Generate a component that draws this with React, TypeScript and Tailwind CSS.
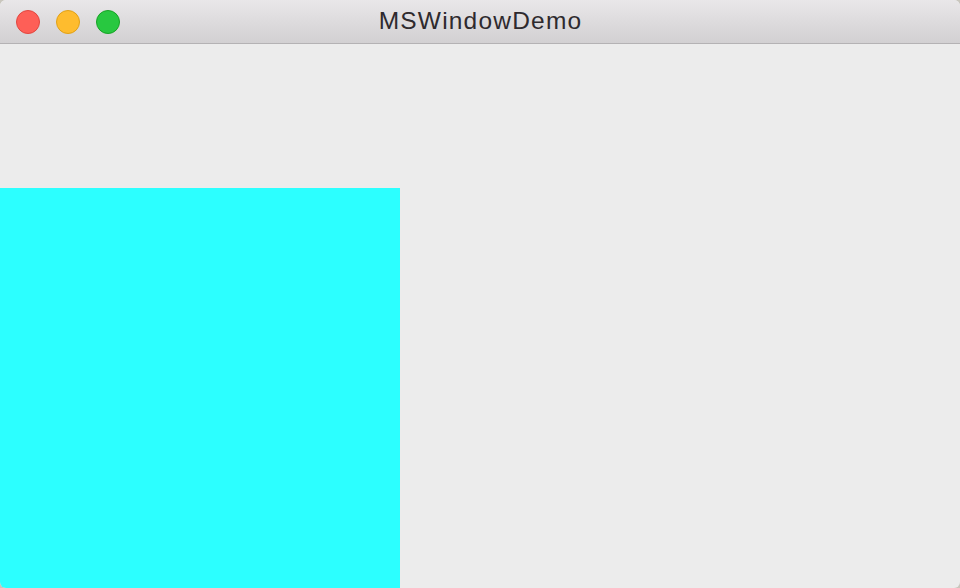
export default function App() {
  return (
    <div className="h-[588px] w-[960px] bg-[#c9c6bd]">
      <div className="flex h-full w-full flex-col overflow-hidden rounded-[6px] bg-[#ececec]">
        <div className="relative flex h-[44px] shrink-0 items-center justify-center border-b border-[#b4b2b4] bg-gradient-to-b from-[#e9e7e9] to-[#d2d0d2]">
          <div className="absolute left-[16px] top-[10px] flex gap-[16px]">
            <span className="h-[24px] w-[24px] rounded-full border border-[#e2463f] bg-[#fe5f57]" />
            <span className="h-[24px] w-[24px] rounded-full border border-[#e1a116] bg-[#febc2e]" />
            <span className="h-[24px] w-[24px] rounded-full border border-[#17a325] bg-[#28c840]" />
          </div>
          <span className="pl-[1px] font-['Liberation_Sans',sans-serif] text-[24.5px] leading-none tracking-[1.2px] text-[#2e2a2e]">MSWindowDemo</span>
        </div>
        <div className="flex flex-1 flex-col">
          <div className="h-[144px]" />
          <div className="h-[400px] w-[400px] bg-[#2cffff]" />
        </div>
      </div>
    </div>
  );
}
